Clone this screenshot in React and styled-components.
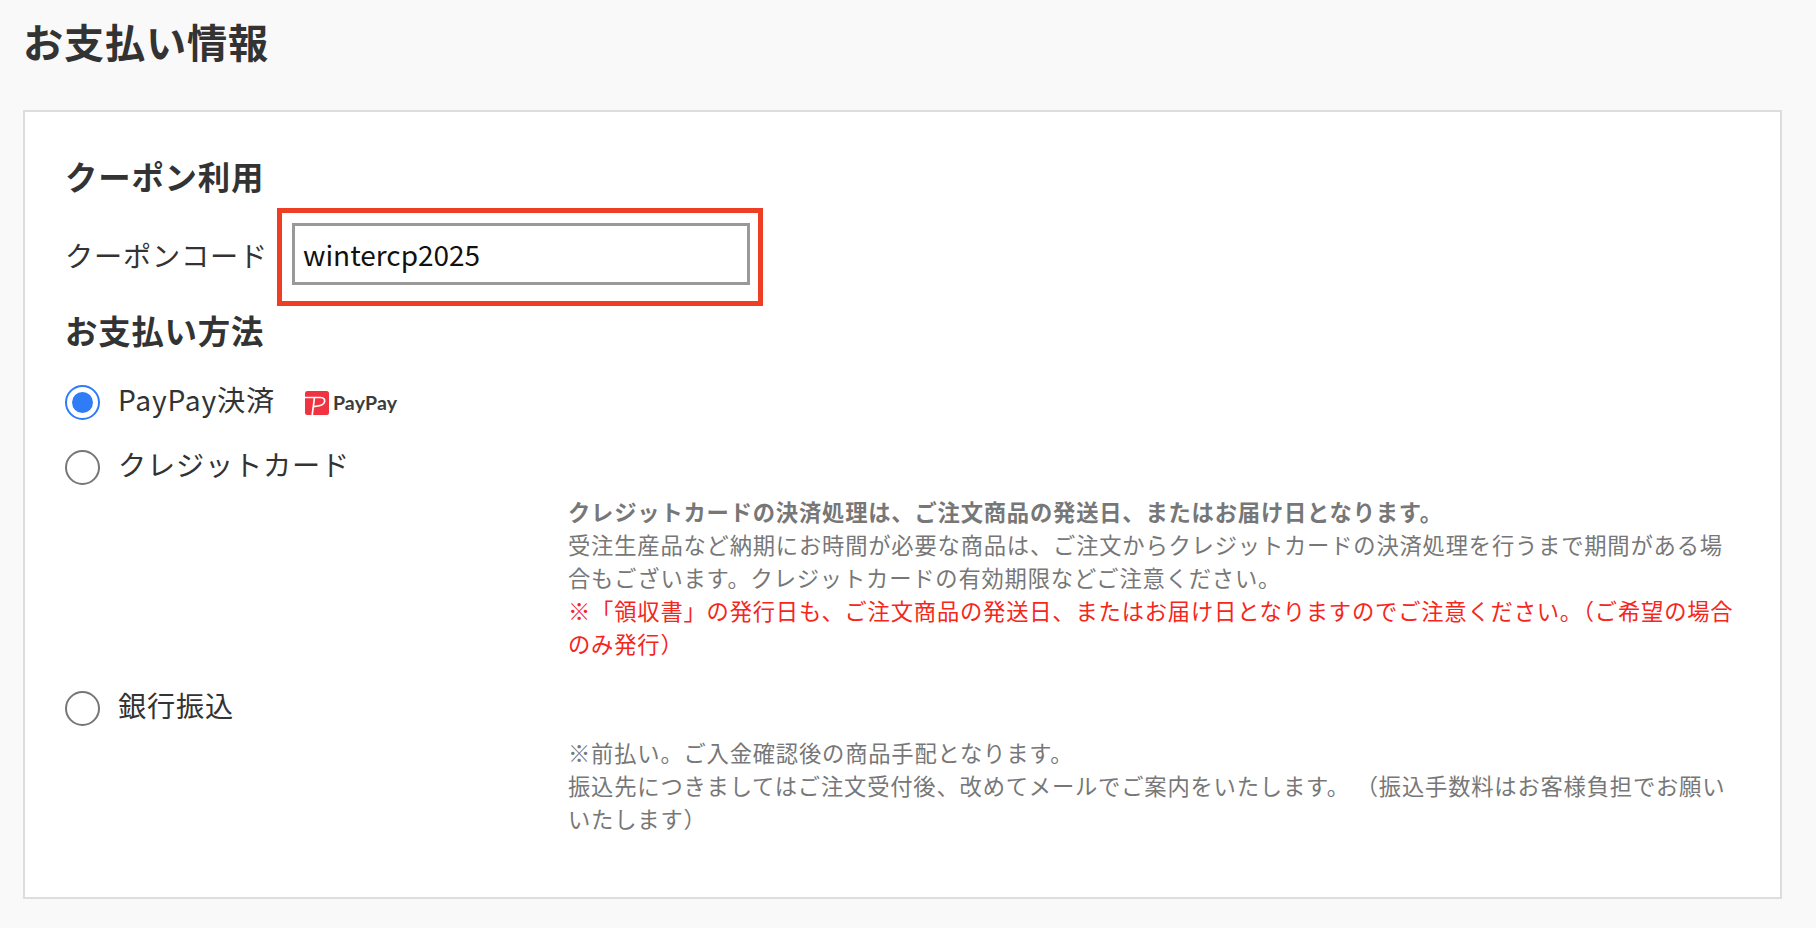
import React from "react";
import styled, { createGlobalStyle } from "styled-components";

const Global = createGlobalStyle`
  html, body { margin: 0; padding: 0; background: #f9f9f9; }
  body { font-family: "Noto Sans CJK JP", "Noto Sans", sans-serif; color: #333; letter-spacing: .05em; }
`;

const Page = styled.main`
  box-sizing: border-box;
  height: 928px;
  overflow: hidden;
  padding: 12px 34px 0 23px;
`;

const PageTitle = styled.h1`
  margin: 0 0 40px 0;
  font-size: 40.2px;
  line-height: 58px;
  font-weight: 700;
`;

const Card = styled.section`
  box-sizing: border-box;
  height: 789px;
  background: #fff;
  border: 2px solid #ddd;
  padding: 41px 41px 0 40px;
`;

const SectionTitle = styled.h2`
  margin: 0;
  font-size: 32.4px;
  line-height: 46px;
  font-weight: 700;
`;

const CouponRow = styled.div`
  display: flex;
  align-items: center;
  gap: 9px;
  margin: 9px 0 1px;
`;

const FieldLabel = styled.label`
  font-size: 28.2px;
  line-height: 40px;
  font-weight: 400;
  margin-bottom: 5px;
`;

const Highlight = styled.div`
  box-sizing: border-box;
  width: 486px;
  height: 98px;
  border: 5px solid #ee3e23;
  padding: 10px;
`;

const CodeInput = styled.input`
  box-sizing: border-box;
  display: block;
  width: 458px;
  height: 62px;
  border: 3px solid #999;
  border-radius: 0;
  padding: 0 8px;
  background: #fff;
  color: #111;
  font: 400 28px "Noto Sans CJK JP", "Noto Sans", sans-serif;
  letter-spacing: 0;
  outline: none;
`;

const Methods = styled.div`
  display: flex;
  flex-direction: column;
  margin-top: 32px;
`;

const Method = styled.div`
  display: flex;
  align-items: center;
  height: 35px;
  gap: 18px;
  margin-top: ${p => p.$top}px;
`;

const Radio = styled.span`
  box-sizing: border-box;
  flex: none;
  width: 35px;
  height: 35px;
  border-radius: 50%;
  border: 2px solid ${p => (p.$on ? "#2f7cf6" : "#767676")};
  background: #fff;
  display: flex;
  align-items: center;
  justify-content: center;
  &::after {
    content: "";
    display: ${p => (p.$on ? "block" : "none")};
    width: 21px;
    height: 21px;
    border-radius: 50%;
    background: #2f7cf6;
  }
`;

const MethodName = styled.span`
  font-size: 28.2px;
  line-height: 35px;
  position: relative;
  top: -4px;
`;

const Logo = styled.span`
  display: inline-flex;
  align-items: center;
  gap: 4px;
  margin-left: 12px;
  color: #3c3c3c;
  font: 700 19.5px/24px Lato, "Noto Sans", sans-serif;
  letter-spacing: .2px;
`;

const Note = styled.div`
  margin: ${p => p.$top}px 0 0 503px;
  font-size: 22.3px;
  line-height: 33px;
  color: #777;
`;

const Strong = styled.strong`
  display: block;
  font-weight: 700;
`;

const Warning = styled.span`
  display: block;
  color: #f5261c;
`;

const PayPayMark = () => (
  <svg width="24" height="24" viewBox="0 0 24 24" aria-hidden="true">
    <rect width="24" height="24" rx="2.5" fill="#ef3340" />
    <path
      d="M0 6.5H15.5C19 6.5 20 8.5 19.6 10.7C19.1 13.6 16 15.2 8.5 15.6"
      fill="none"
      stroke="#fff"
      strokeWidth="1.7"
    />
    <path d="M9.5 6.5L7.2 24" fill="none" stroke="#fff" strokeWidth="1.7" />
  </svg>
);

export default function App() {
  return (
    <Page>
      <Global />
      <PageTitle>お支払い情報</PageTitle>
      <Card>
        <SectionTitle>クーポン利用</SectionTitle>
        <CouponRow>
          <FieldLabel htmlFor="coupon">クーポンコード</FieldLabel>
          <Highlight>
            <CodeInput id="coupon" defaultValue="wintercp2025" />
          </Highlight>
        </CouponRow>
        <SectionTitle>お支払い方法</SectionTitle>
        <Methods>
          <Method>
            <Radio $on />
            <MethodName>PayPay決済</MethodName>
            <Logo>
              <PayPayMark />
              PayPay
            </Logo>
          </Method>
          <Method $top={30}>
            <Radio />
            <MethodName>クレジットカード</MethodName>
          </Method>
          <Note $top={10}>
            <Strong>クレジットカードの決済処理は、ご注文商品の発送日、またはお届け日となります。</Strong>
            受注生産品など納期にお時間が必要な商品は、ご注文からクレジットカードの決済処理を行うまで期間がある場合もございます。クレジットカードの有効期限などご注意ください。
            <Warning>※「領収書」の発行日も、ご注文商品の発送日、またはお届け日となりますのでご注意ください。（ご希望の場合のみ発行）</Warning>
          </Note>
          <Method $top={31}>
            <Radio />
            <MethodName>銀行振込</MethodName>
          </Method>
          <Note $top={10}>
            ※前払い。ご入金確認後の商品手配となります。
            <br />
            振込先につきましてはご注文受付後、改めてメールでご案内をいたします。 （振込手数料はお客様負担でお願いいたします）
          </Note>
        </Methods>
      </Card>
    </Page>
  );
}
